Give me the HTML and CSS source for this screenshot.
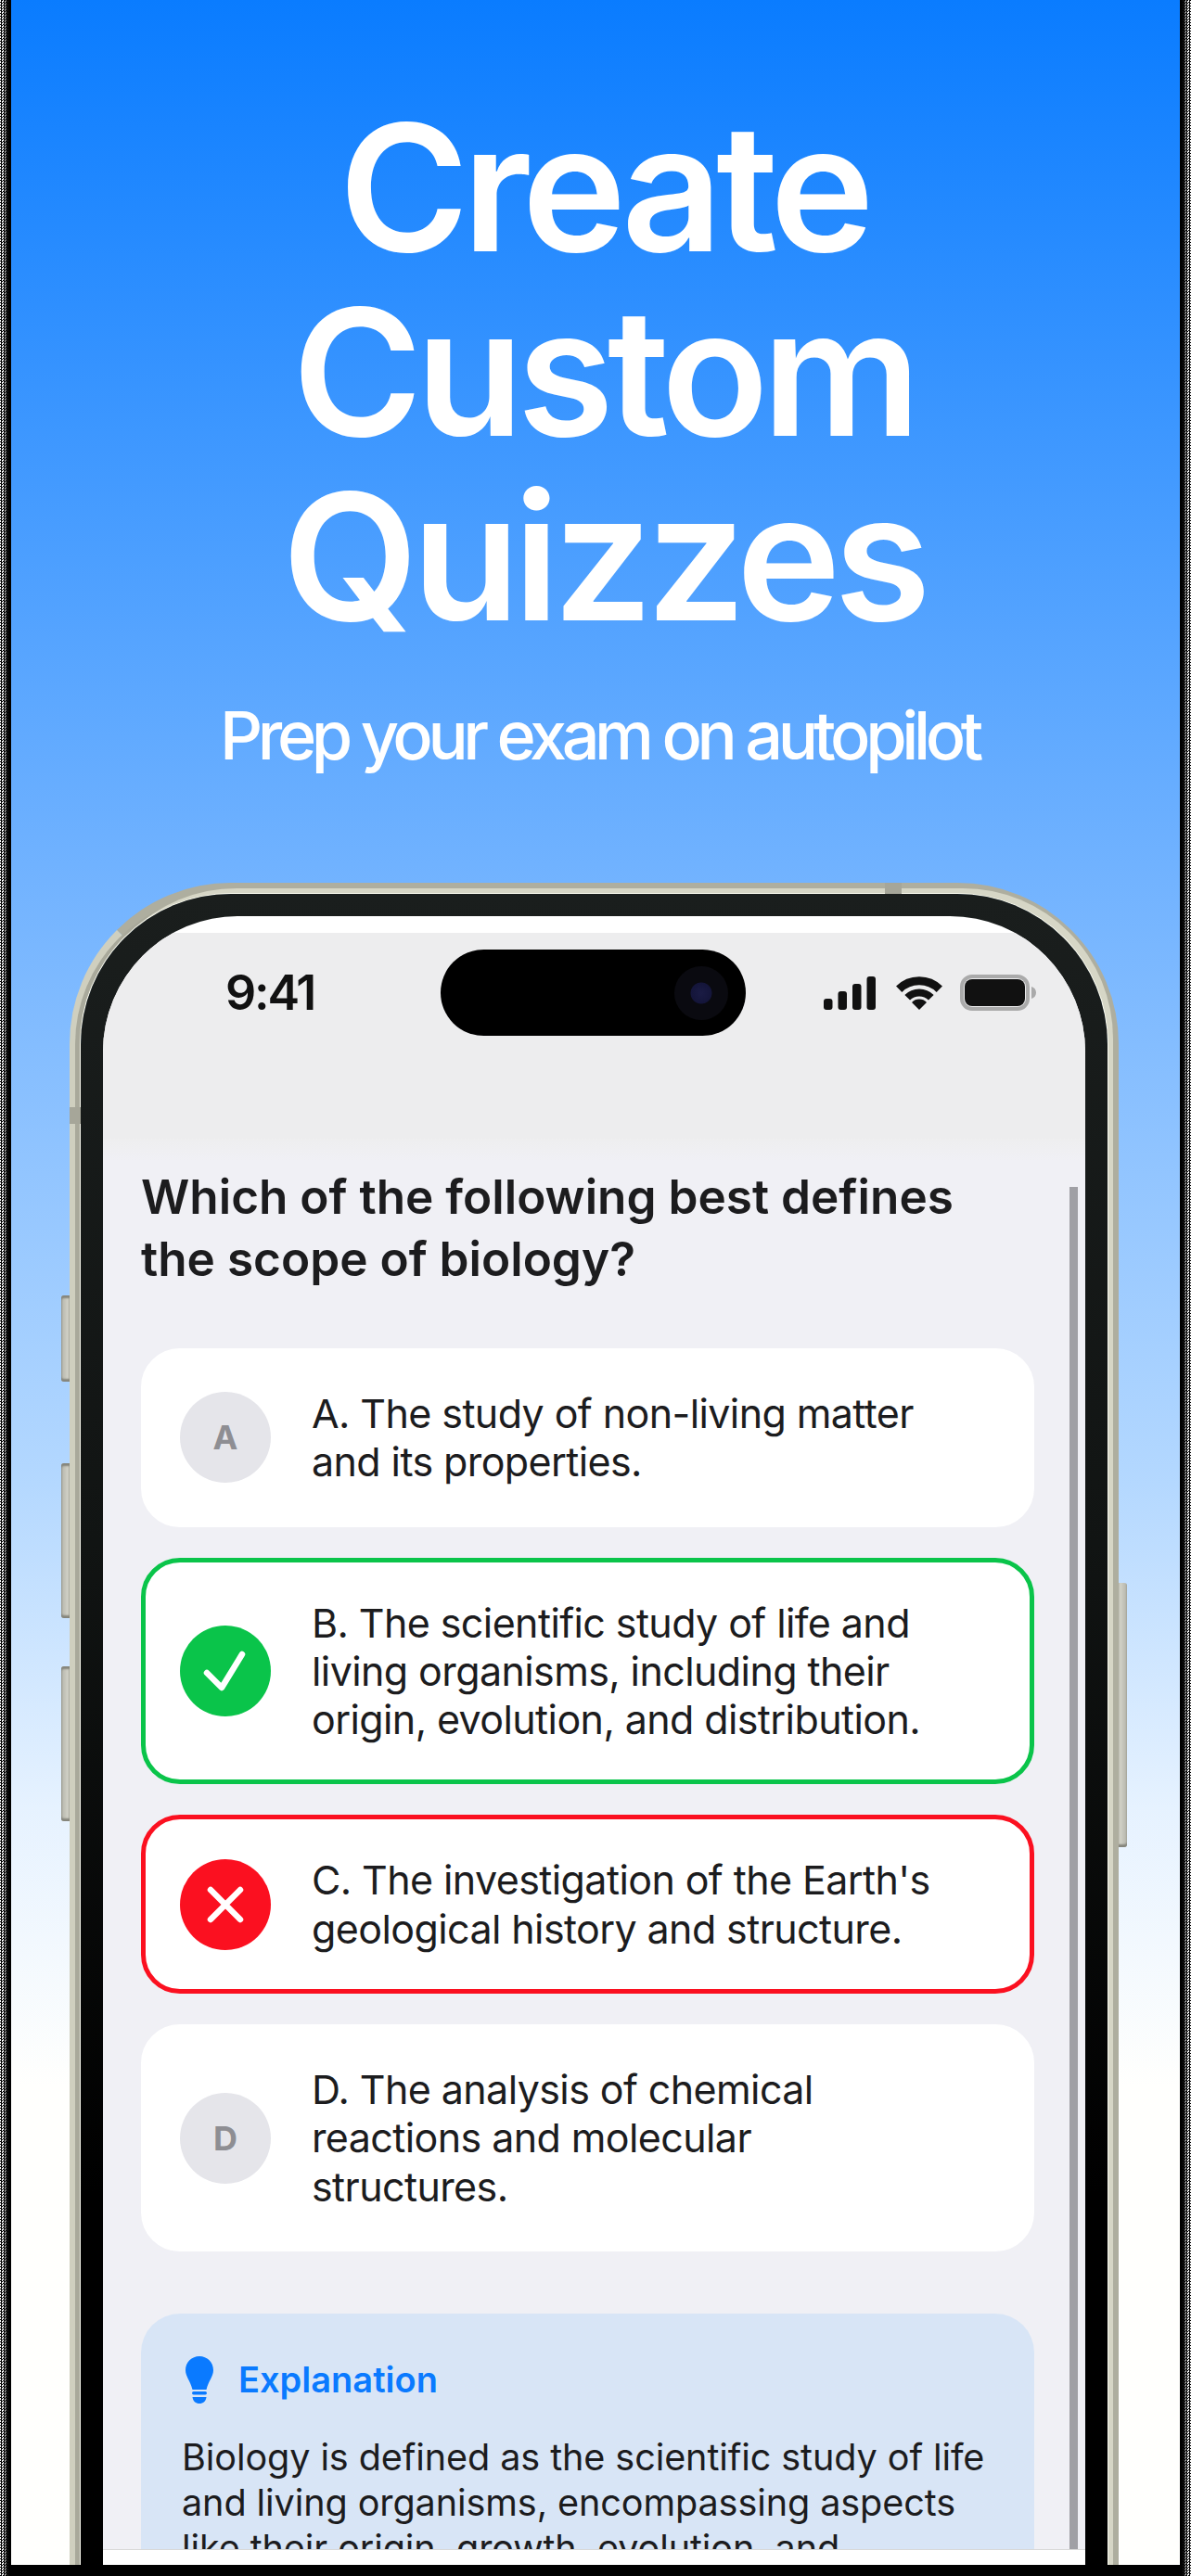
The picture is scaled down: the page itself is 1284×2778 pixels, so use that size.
FILE: index.html
```html
<!DOCTYPE html>
<html lang="en">

<head>
    <meta charset="UTF-8">
    <meta name="viewport" content="width=device-width, initial-scale=1.0">
    <title>Create Custom Quizzes</title>
    <link rel="stylesheet" href="styles.css">
</head>

<body>
    <div class="shot">
        <div class="edge edge-left"></div>

        <main class="poster">
            <header class="hero">
                <h1>Create<br>Custom<br>Quizzes</h1>
                <p>Prep your exam on autopilot</p>
            </header>

            <div class="phone">
                <span class="btn btn-mute"></span>
                <span class="btn btn-up"></span>
                <span class="btn btn-down"></span>
                <span class="btn btn-power"></span>
                <span class="band band-top"></span>
                <span class="band band-left"></span>

                <div class="bezel">
                    <div class="screen">
                        <div class="status">
                            <span class="time">9:41</span>
                            <div class="island"><span class="camera"></span></div>
                            <div class="status-icons">
                                <svg class="signal" width="56" height="36" viewBox="0 0 56 36">
                                    <rect x="0" y="24" width="9.500" height="12" rx="3" />
                                    <rect x="15.500" y="16" width="9.500" height="20" rx="3" />
                                    <rect x="31" y="8" width="9.500" height="28" rx="3" />
                                    <rect x="46.500" y="0" width="9.500" height="36" rx="3" />
                                </svg>
                                <svg width="52" height="36" viewBox="0 0 52 36">
                                    <path d="M4.200 13.700A31 31 0 0 1 47.800 13.700" fill="none" stroke="#111" stroke-width="9" />
                                    <path d="M13.200 22.800A18 18 0 0 1 38.800 22.800" fill="none" stroke="#111" stroke-width="8" />
                                    <path d="M26 36L18 28A11 11 0 0 1 34 28Z" />
                                </svg>
                                <svg width="82" height="39" viewBox="0 0 82 39">
                                    <rect x="2" y="2" width="71" height="35" rx="11" fill="none" stroke="#aaa" stroke-width="4" />
                                    <rect x="5" y="5" width="65" height="29" rx="8" />
                                    <path d="M77 13C80 14 82 16 82 19.500C82 23 80 25 77 26Z" fill="#aaa" />
                                </svg>
                            </div>
                        </div>

                        <div class="scroll">
                            <span class="scrollbar"></span>
                            <h2>Which of the following best defines the scope of biology?</h2>

                            <div class="answers">
                                <div class="answer">
                                    <span class="mark">A</span>
                                    <p>A. The study of non-living matter and its properties.</p>
                                </div>
                                <div class="answer answer-right">
                                    <span class="mark mark-right">
                                        <svg width="98" height="98" viewBox="-49 -49 98 98">
                                            <path d="M-20 2L-4 18L18 -18" fill="none" stroke="#fff" stroke-width="6.500" stroke-linecap="round" stroke-linejoin="round" />
                                        </svg>
                                    </span>
                                    <p>B. The scientific study of life and living organisms, including their origin, evolution, and distribution.</p>
                                </div>
                                <div class="answer answer-wrong">
                                    <span class="mark mark-wrong">
                                        <svg width="98" height="98" viewBox="-49 -49 98 98">
                                            <path d="M-16 -16L16 16M16 -16L-16 16" fill="none" stroke="#fff" stroke-width="6.500" stroke-linecap="round" />
                                        </svg>
                                    </span>
                                    <p>C. The investigation of the Earth's geological history and structure.</p>
                                </div>
                                <div class="answer">
                                    <span class="mark">D</span>
                                    <p>D. The analysis of chemical reactions and molecular structures.</p>
                                </div>
                            </div>

                            <section class="explain">
                                <div class="explain-head">
                                    <svg width="30" height="51" viewBox="0 0 30 51">
                                        <path d="M15 0C6.700 0 0 6.600 0 15C0 22 5 26 7.500 36H22.500C25 26 30 22 30 15C30 6.600 23.300 0 15 0Z" />
                                        <rect x="7" y="38" width="16" height="3.500" rx="1.700" />
                                        <path d="M7.500 44H22.500C22 48.500 19 51 15 51C11 51 8 48.500 7.500 44Z" />
                                    </svg>
                                    <h3>Explanation</h3>
                                </div>
                                <p>Biology is defined as the scientific study of life and living organisms, encompassing aspects like their origin, growth, evolution, and distribution across the planet.</p>
                            </section>
                        </div>

                        <div class="home-strip"></div>
                    </div>
                </div>
            </div>
        </main>

        <div class="edge edge-right"></div>
    </div>
</body>

</html>
```

FILE: styles.css
```css
* {
    box-sizing: border-box;
}

body {
    margin: 0;
    background-color: black;
    font-family: Inter, "Noto Sans", sans-serif;
}

.shot {
    display: flex;
    height: 2778px;
    padding-bottom: 12px;
    overflow: hidden;
}

/* Leftover transparency checker down both sides of the shot */
.edge {
    flex: 0 0 12px;
    margin-bottom: -12px;
    background-size: 100% 100%, 3px 3px;
}

.edge-left {
    background-image: linear-gradient(to right, transparent 30%, black 75%), repeating-conic-gradient(black 0 25%, white 0 50%);
}

.edge-right {
    background-image: linear-gradient(to left, transparent 30%, black 75%), repeating-conic-gradient(black 0 25%, white 0 50%);
}

.poster {
    flex: 1;
    overflow: hidden;
    background: linear-gradient(to bottom, #0a7cff 0, #72b3ff 950px, #b4d8ff 1600px, #e6f2ff 1950px, #fffffd 2250px);
}

.hero {
    height: 952px;
    padding-top: 103px;
    text-align: center;
    color: white;
}

.hero h1 {
    margin: 0;
    padding-left: 17px;
    font-size: 190px;
    font-weight: 600;
    line-height: 199px;
    letter-spacing: -7px;
}

.hero p {
    margin: 49px 0 0;
    padding-left: 8px;
    font-size: 72px;
    font-weight: 500;
    line-height: 88px;
    letter-spacing: -5.400px;
}

.phone {
    position: relative;
    width: 1131px;
    height: 2100px;
    margin-left: 63px;
    border: 12px solid #aeae9f;
    border-left-color: #cfcfbf;
    border-radius: 174px;
}

.btn {
    position: absolute;
    width: 9px;
    background: linear-gradient(to right, #b4b4aa, #d8d8ce);
    border-radius: 3px 0 0 3px;
    box-shadow: inset 0 3px 2px #85857c, inset 0 -3px 2px #85857c;
}

.btn-mute {
    left: -21px;
    top: 433px;
    height: 93px;
}

.btn-up {
    left: -21px;
    top: 614px;
    height: 167px;
}

.btn-down {
    left: -21px;
    top: 833px;
    height: 167px;
}

.btn-power {
    right: -21px;
    top: 743px;
    height: 285px;
    border-radius: 0 3px 3px 0;
    background: linear-gradient(to left, #b4b4aa, #d8d8ce);
    box-shadow: inset 0 -3px 2px #85857c;
}

.band {
    position: absolute;
    background-color: #a6a699;
}

.band-top {
    left: 867px;
    top: -12px;
    width: 18px;
    height: 12px;
}

.band-left {
    left: -12px;
    top: 230px;
    width: 12px;
    height: 18px;
}

.bezel {
    height: 100%;
    padding: 24px;
    background: linear-gradient(to bottom, #1a1e1d 0, #111413 700px, black 1400px);
    border-radius: 162px;
    box-shadow: 0 0 0 1px #fbfbf0, 6px -6px 0 0 #d6d6c6, -6px 0 0 0 #a9a99b;
}

.screen {
    height: 1779px;
    padding-top: 18px;
    background-color: white;
    border-radius: 146px 146px 0 0;
    overflow: hidden;
}

.status {
    display: grid;
    grid-template-columns: 232px 329px 1fr;
    align-items: center;
    height: 222px;
    padding: 18px 53px 111px 132px;
    background-color: #ededee;
}

.time {
    font-size: 52px;
    font-weight: 600;
    letter-spacing: -2.200px;
    color: #111;
}

.island {
    display: flex;
    justify-content: flex-end;
    align-items: center;
    height: 93px;
    padding-right: 19px;
    background-color: black;
    border-radius: 47px;
}

.camera {
    display: flex;
    width: 58px;
    height: 58px;
    background: radial-gradient(circle, #1a1b44 0, #14153a 27%, #0a0a10 29%, #0a0a10 100%);
    border-radius: 50%;
}

.status-icons {
    display: flex;
    justify-content: flex-end;
    align-items: center;
    gap: 18px;
    fill: #111;
}

.signal {
    margin-right: 3px;
}

.scroll {
    position: relative;
    height: 1521px;
    padding: 29px 55px 0 41px;
    background: linear-gradient(to bottom, #eeeeef, #f0f0f5 24px);
    overflow: hidden;
}

.scrollbar {
    position: absolute;
    right: 8px;
    top: 52px;
    bottom: 0;
    width: 9px;
    background-color: #a0a0a5;
}

h2 {
    max-width: 920px;
    margin: 0;
    font-size: 51.300px;
    font-weight: 600;
    line-height: 67px;
    color: #1c1c1e;
}

.answers {
    display: flex;
    flex-direction: column;
    gap: 33px;
    margin-top: 63px;
}

.answer {
    display: flex;
    align-items: center;
    gap: 44px;
    padding: 39px 92px 39px 37px;
    background-color: white;
    border: 5px solid white;
    border-radius: 42px;
}

.answer p {
    margin: 0;
    flex: 1;
    font-size: 43px;
    line-height: 52.300px;
    letter-spacing: -0.600px;
    color: #1c1c1e;
}

.answer-right {
    border-color: #0ac44a;
}

.answer-wrong {
    border-color: #fb1020;
}

.mark {
    display: flex;
    flex: 0 0 98px;
    justify-content: center;
    align-items: center;
    height: 98px;
    font-size: 36px;
    font-weight: 700;
    color: #8e8e93;
    background-color: #e5e5ea;
    border-radius: 50%;
}

.mark-right {
    background-color: #0ac44a;
}

.mark-wrong {
    background-color: #fb1020;
}

.explain {
    margin-top: 67px;
    padding: 46px 46px 46px 44px;
    background-color: #d8e5f6;
    border-radius: 42px;
}

.explain-head {
    display: flex;
    align-items: center;
    gap: 27px;
    margin-left: 4px;
    fill: #0a7aff;
}

h3 {
    margin: 0;
    font-size: 38px;
    font-weight: 600;
    color: #0a7aff;
}

.explain p {
    margin: 34px 0 0;
    font-size: 39.600px;
    line-height: 49px;
    letter-spacing: -0.100px;
    color: #1c1c1e;
}

.home-strip {
    height: 18px;
    background-color: white;
    border-top: 1px solid #d8d8d8;
}
```
